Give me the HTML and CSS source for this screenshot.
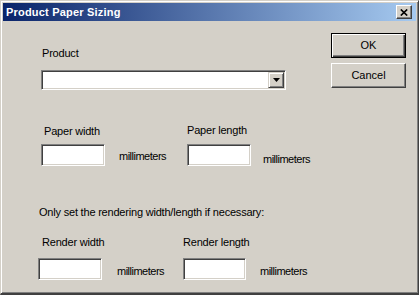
FILE: index.html
```html
<!DOCTYPE html>
<html lang="en">
  <head>
    <meta charset="UTF-8" />
    <meta name="viewport" content="width=device-width, initial-scale=1.0" />
    <title>Product Paper Sizing</title>
    <link rel="stylesheet" href="styles.css">
  </head>
  <body>
    <!-- Janela do diálogo -->
    <div class="window">
      <div class="titlebar">
        <span class="title">Product Paper Sizing</span>
        <button class="close" type="button">
          <svg width="8" height="7" viewBox="0 0 8 7">
            <path d="M0.8 0.5 L7.2 6.5 M7.2 0.5 L0.8 6.5" stroke="#000" stroke-width="1.7" fill="none" />
          </svg>
        </button>
      </div>

      <div class="client">
        <div class="form">
          <!-- Produto -->
          <div class="product">
            <div class="label">Product</div>
            <div class="combo">
              <div class="combo-text"></div>
              <div class="combo-btn">
                <svg width="7" height="4" viewBox="0 0 7 4"><polygon points="0,0 7,0 3.5,4" fill="#000" /></svg>
              </div>
            </div>
          </div>

          <!-- Tamanho do papel -->
          <div class="row paper">
            <div class="group g1">
              <div class="label">Paper width</div>
              <div class="field">
                <input class="edit" type="text" />
                <span class="unit">millimeters</span>
              </div>
            </div>
            <div class="group g2">
              <div class="label">Paper length</div>
              <div class="field">
                <input class="edit" type="text" />
                <span class="unit">millimeters</span>
              </div>
            </div>
          </div>

          <div class="note">Only set the rendering width/length if necessary:</div>

          <!-- Tamanho de renderização -->
          <div class="row render">
            <div class="group g1">
              <div class="label">Render width</div>
              <div class="field">
                <input class="edit" type="text" />
                <span class="unit">millimeters</span>
              </div>
            </div>
            <div class="group g2">
              <div class="label">Render length</div>
              <div class="field">
                <input class="edit narrow" type="text" />
                <span class="unit">millimeters</span>
              </div>
            </div>
          </div>
        </div>

        <!-- Botões -->
        <div class="side">
          <button class="btn default" type="button">OK</button>
          <button class="btn" type="button">Cancel</button>
        </div>
      </div>
    </div>
  </body>
</html>
```

FILE: styles.css
```css
/* Página */
body {
  margin: 0;
  background-color: #d4d0c8;
  font-family: "Liberation Sans", Arial, sans-serif;
  font-size: 11px;
  line-height: 13px;
  letter-spacing: -0.2px;
  color: #000;
}

/* Janela com moldura 3D */
.window {
  width: 419px;
  height: 295px;
  box-sizing: border-box;
  padding: 2px 2px 1px 2px;
  border: 1px solid;
  border-bottom-width: 2px;
  border-color: #d4d0c8 #404040 #404040 #d4d0c8;
  box-shadow: inset 1px 1px #fff, inset -1px -1px #808080;
  background-color: #d4d0c8;
  display: flex;
  flex-direction: column;
}

/* Barra de título */
.titlebar {
  height: 18px;
  display: flex;
  align-items: center;
  justify-content: space-between;
  padding: 0 4px 0 3px;
  background: linear-gradient(to right, #0a246a, #a6caf0);
}

.title {
  color: #fff;
  font-weight: bold;
  letter-spacing: 0.2px;
  line-height: 18px;
}

.close {
  width: 16px;
  height: 14px;
  padding: 0;
  margin: 0;
  display: flex;
  align-items: center;
  justify-content: center;
  background-color: #d4d0c8;
  border: 1px solid;
  border-color: #fff #404040 #404040 #fff;
  box-shadow: inset -1px -1px #808080;
}

/* Área do cliente */
.client {
  flex: 1;
  display: flex;
}

.form {
  flex: 1;
}

.side {
  width: 75px;
  margin-right: 10px;
  padding-top: 12px;
  display: flex;
  flex-direction: column;
  gap: 5px;
}

/* Campo de produto */
.product {
  margin-left: 38px;
  padding-top: 26px;
}

.product .label {
  padding-left: 1px;
}

.combo {
  width: 245px;
  height: 20px;
  margin-top: 10px;
  box-sizing: border-box;
  display: flex;
  justify-content: flex-end;
  background-color: #fff;
  border: 1px solid;
  border-color: #808080 #fff #fff #808080;
  box-shadow: inset 1px 1px #404040, inset -1px -1px #d4d0c8;
  padding: 1px;
}

.combo-btn {
  width: 16px;
  box-sizing: border-box;
  display: flex;
  align-items: center;
  justify-content: center;
  background-color: #d4d0c8;
  border: 1px solid;
  border-color: #d4d0c8 #404040 #404040 #d4d0c8;
  box-shadow: inset 1px 1px #fff, inset -1px -1px #808080;
}

/* Linhas de campos */
.row {
  display: flex;
  align-items: flex-start;
}

.paper {
  margin-top: 34px;
}

.paper .g1 {
  margin-left: 38px;
  width: 146px;
  padding-top: 1px;
}

.paper .g1 .label {
  padding-left: 3px;
}

.paper .g1 .field {
  margin-top: 6px;
}

.paper .g2 .field {
  margin-top: 7px;
}

.paper .g1 .unit {
  margin-left: 14px;
  margin-top: 6px;
}

.paper .g2 .unit {
  margin-left: 12px;
  margin-top: 9px;
}

.note {
  margin-top: 40px;
  margin-left: 36px;
}

.render {
  margin-top: 17px;
}

.render .g1 {
  margin-left: 35px;
  width: 145px;
}

.render .g1 .label {
  padding-left: 4px;
}

.render .field {
  margin-top: 9px;
}

.render .g1 .unit {
  margin-left: 15px;
  margin-top: 7px;
}

.render .g2 .unit {
  margin-left: 14px;
  margin-top: 7px;
}

.field {
  display: flex;
  align-items: flex-start;
}

.unit {
  letter-spacing: -0.5px;
}

/* Caixas de texto afundadas */
.edit {
  width: 64px;
  height: 22px;
  margin: 0;
  padding: 0 3px;
  box-sizing: border-box;
  font: inherit;
  background-color: #fff;
  border: 1px solid;
  border-color: #808080 #fff #fff #808080;
  box-shadow: inset 1px 1px #404040, inset -1px -1px #d4d0c8;
  outline: none;
}

.edit.narrow {
  width: 63px;
}

/* Botões */
.btn {
  width: 75px;
  height: 25px;
  margin: 0;
  padding: 0;
  font: inherit;
  color: #000;
  background-color: #d4d0c8;
  border: 1px solid;
  border-color: #fff #404040 #404040 #fff;
  box-shadow: inset -1px -1px #808080;
}

.btn.default {
  border-color: #000;
  box-shadow: inset 1px 1px #fff, inset -1px -1px #404040, inset -2px -2px #808080;
}
```
